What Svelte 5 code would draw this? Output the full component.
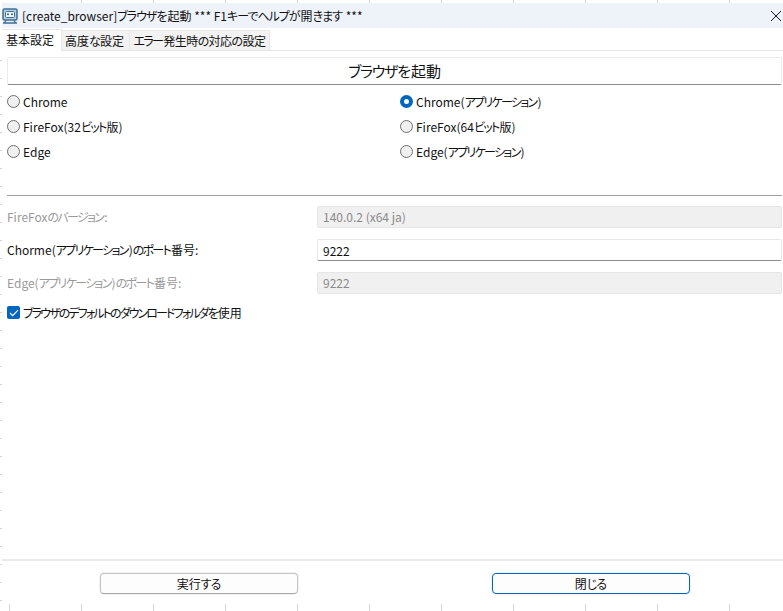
<script lang="ts">
    const topTicks = [81, 153, 225, 297, 369, 441, 513, 585, 657, 729];
    const bottomTicks = [9, ...topTicks];
    const sideTicks = Array.from({ length: 31 }, (_, i) => 60 + i * 18);

    const browsers = [
        ["Chrome", "Chrome(アプリケーション)"],
        ["FireFox(32ビット版)", "FireFox(64ビット版)"],
        ["Edge", "Edge(アプリケーション)"]
    ];
    let selected = "Chrome(アプリケーション)";
    let useDefaultFolder = true;
    let port = "9222";

    // kana runs get tighter spacing, the original UI font sets them narrow
    const runs = (text: string) => text.split(/([\u3040-\u30ff]+)/).filter(Boolean);
    const isKana = (run: string) => /^[\u3040-\u30ff]/.test(run);
</script>

{#snippet txt(text)}
    {#each runs(text) as run}{#if isKana(run)}<span class="kana">{run}</span>{:else}{run}{/if}{/each}
{/snippet}

<div class="window">
    {#each topTicks as x}
        <span class="tick top" style="left: {x}px"></span>
    {/each}
    {#each bottomTicks as x}
        <span class="tick bottom" style="left: {x}px"></span>
    {/each}
    {#each sideTicks as y}
        <span class="tick side" style="top: {y}px"></span>
    {/each}

    <div class="titlebar">
        <svg class="app-icon" width="16" height="16" viewBox="0 0 16 16">
            <rect x="1" y="1" width="14" height="11" rx="1.5" fill="#b9cfe0" stroke="#3f6f94" stroke-width="1.5" />
            <rect x="3.5" y="3.5" width="9" height="6" rx="1" fill="#eef4f8" stroke="#3f6f94" />
            <circle cx="6" cy="6.3" r="1" fill="#2f5f84" />
            <circle cx="10" cy="6.3" r="1" fill="#2f5f84" />
            <path d="M1 15h14M4 12.5l-1.5 2.5M12 12.5l1.5 2.5" stroke="#3f6f94" stroke-width="1.4" fill="none" />
        </svg>
        <span class="title">{@render txt("[create_browser]ブラウザを起動 *** F1キーでヘルプが開きます ***")}</span>
        <svg class="close" width="10" height="10" viewBox="0 0 10 10">
            <path d="M0 0l10 10M10 0L0 10" stroke="#1a1a1a" stroke-width="1" />
        </svg>
    </div>

    <div class="tabs">
        <div class="tab active">基本設定</div>
        <div class="tab second">{@render txt("高度な設定")}</div>
        <div class="tab third">{@render txt("エラー発生時の対応の設定")}</div>
    </div>

    <div class="content">
        <div class="heading">{@render txt("ブラウザを起動")}</div>

        <div class="radios">
            {#each browsers as row}
                {#each row as name}
                    <label class="radio">
                        <input type="radio" bind:group={selected} value={name} />
                        <span>{@render txt(name)}</span>
                    </label>
                {/each}
            {/each}
        </div>

        <hr class="divider" />

        <div class="fields">
            <span class="label disabled">{@render txt("FireFoxのバージョン:")}</span>
            <div class="field disabled">140.0.2 (x64 ja)</div>
            <span class="label">{@render txt("Chorme(アプリケーション)のポート番号:")}</span>
            <input class="field" bind:value={port} />
            <span class="label disabled">{@render txt("Edge(アプリケーション)のポート番号:")}</span>
            <div class="field disabled">9222</div>
        </div>

        <label class="check">
            <input type="checkbox" bind:checked={useDefaultFolder} />
            <span class="box">
                <svg width="10" height="8" viewBox="0 0 10 8">
                    <path d="M1 4l2.7 2.7L9 1.2" stroke="#fff" stroke-width="1.2" fill="none" />
                </svg>
            </span>
            <span>{@render txt("ブラウザのデフォルトのダウンロードフォルダを使用")}</span>
        </label>
    </div>

    <div class="footer">
        <button class="btn">{@render txt("実行する")}</button>
        <button class="btn primary">{@render txt("閉じる")}</button>
    </div>
</div>

<style>
    :global(body) {
        margin: 0;
        background: #fff;
    }

    .window {
        position: relative;
        width: 783px;
        height: 611px;
        overflow: hidden;
        display: flex;
        flex-direction: column;
        background: #fff;
        color: #111;
        font-family: "Noto Sans CJK JP", "Open Sans", sans-serif;
        font-size: 12px;
        font-feature-settings: "palt";
        --kana: -1.7px;
    }
    .kana {
        letter-spacing: var(--kana);
        padding-right: 1px;
    }

    .tick {
        position: absolute;
        background: #d4d4d4;
    }
    .tick.top {
        top: 0;
        width: 1px;
        height: 3px;
    }
    .tick.bottom {
        bottom: 0;
        width: 1px;
        height: 7px;
    }
    .tick.side {
        left: 0;
        width: 2px;
        height: 1px;
    }

    .titlebar {
        margin-top: 3px;
        margin-left: 2px;
        height: 25px;
        flex: none;
        display: flex;
        align-items: center;
        background: #eef2f9;
        --kana: -1px;
    }
    .app-icon {
        flex: none;
    }
    .title {
        margin-left: 4px;
        flex: 1;
        white-space: nowrap;
    }
    .close {
        margin-right: 2px;
        flex: none;
    }

    .tabs {
        display: flex;
        flex: none;
        height: 22px;
        margin-left: 2px;
        border-bottom: 1px solid #e4e4e4;
        align-items: flex-end;
    }
    .tab {
        box-sizing: border-box;
        height: 20px;
        line-height: 20px;
        text-align: center;
        background: #f2f2f2;
        border: 1px solid #e8e8e8;
        border-bottom: none;
        border-left: none;
    }
    .tab.active {
        width: 60px;
        height: 22px;
        line-height: 20px;
        padding-right: 3px;
        background: #fff;
        margin-bottom: -1px;
    }
    .tab.second {
        width: 68px;
        padding-right: 2px;
    }
    .tab.third {
        width: 140px;
        letter-spacing: -0.5px;
    }

    .content {
        flex: 1;
        padding: 6px 1px 0 7px;
        display: flex;
        flex-direction: column;
    }
    .heading {
        height: 26px;
        line-height: 26px;
        text-align: center;
        font-size: 15px;
        border: 1px solid #ebebeb;
        border-bottom: 1px solid #8a8a8a;
        border-radius: 2px;
        --kana: -1.2px;
    }

    .radios {
        display: grid;
        grid-template-columns: 393px 1fr;
        grid-auto-rows: 25px;
        margin-top: 4px;
    }
    .radio {
        display: flex;
        align-items: center;
        gap: 3px;
    }
    .radio input {
        appearance: none;
        margin: 0;
        width: 13px;
        height: 13px;
        border: 1px solid #6f6f6f;
        border-radius: 50%;
        background: #f0f0f0;
        box-sizing: border-box;
    }
    .radio input:checked {
        border: 4px solid #0067c0;
        background: #fff;
    }

    .divider {
        margin: 31px 0 0;
        border: none;
        border-top: 1px solid #a0a0a0;
    }

    .fields {
        display: grid;
        grid-template-columns: 310px 1fr;
        row-gap: 11px;
        margin-top: 10px;
        align-items: center;
    }
    .label {
        padding-bottom: 2px;
    }
    .label.disabled {
        color: #9a9a9a;
    }
    .field {
        box-sizing: border-box;
        height: 22px;
        width: 100%;
        padding: 0 5px;
        font: inherit;
        line-height: 20px;
        color: #111;
        background: #fff;
        border: 1px solid #e8e8e8;
        border-bottom: 1px solid #8a8a8a;
        border-radius: 2px;
        outline: none;
    }
    .field.disabled {
        color: #8a8a8a;
        background: #f0f0f0;
        border: 1px solid #e6e6e6;
    }

    .check {
        display: flex;
        align-items: center;
        gap: 3px;
        margin-top: 10px;
        --kana: -1.9px;
    }
    .check input {
        display: none;
    }
    .box {
        width: 13px;
        height: 13px;
        border-radius: 2px;
        background: #0067c0;
        display: flex;
        align-items: center;
        justify-content: center;
    }

    .footer {
        flex: none;
        height: 50px;
        margin-left: 2px;
        border-top: 2px solid #eaeaea;
        display: flex;
        justify-content: flex-start;
        --kana: -1px;
    }
    .btn {
        width: 198px;
        height: 21px;
        margin-top: 12px;
        margin-left: 98px;
        padding: 0;
        font: inherit;
        color: #111;
        background: #fdfdfd;
        border: 1px solid #c4c4c4;
        border-bottom-color: #a8a8a8;
        border-radius: 4px;
        box-shadow: 0 0 0 1px #f3f3f3;
    }
    .btn.primary {
        margin-left: 194px;
        border: 1.5px solid #0067c0;
    }
</style>
